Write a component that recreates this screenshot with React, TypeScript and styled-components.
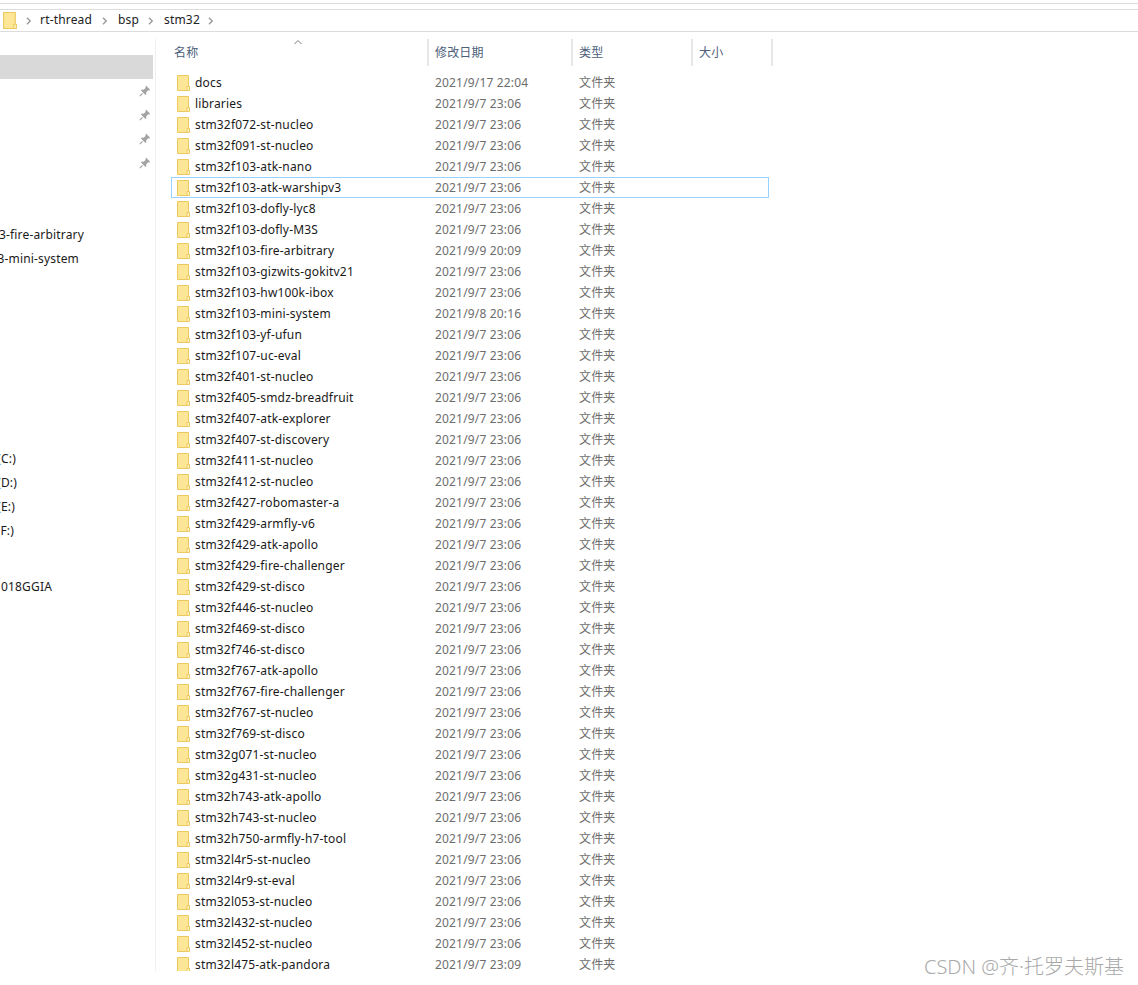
import React from 'react';
import styled, { createGlobalStyle } from 'styled-components';

const GlobalStyle = createGlobalStyle`
  html, body {
    margin: 0;
    padding: 0;
    background: #ffffff;
    overflow: hidden;
  }
`;

const FONT = `"Noto Sans", "Noto Sans CJK SC", sans-serif`;

const Page = styled.div`
  position: relative;
  width: 1138px;
  height: 985px;
  overflow: hidden;
  font-family: ${FONT};
  font-size: 12px;
  letter-spacing: 0.17px;
  padding-top: 3px;
  box-sizing: border-box;
`;

const TopLine = styled.div`
  height: 1px;
  background: #dcdcdc;
  margin-bottom: 5px;
`;

const AddressBar = styled.div`
  height: 23px;
  box-sizing: border-box;
  border-top: 1px solid #dcdcdc;
  border-bottom: 1px solid #dcdcdc;
  display: flex;
  align-items: center;
  padding-left: 3px;
  color: #222222;
`;

const Crumb = styled.span<{ $gap: number }>`
  margin-left: ${(p) => p.$gap}px;
  line-height: 20px;
  margin-bottom: 1px;
`;

const Chevron = styled.svg<{ $gap: number }>`
  flex: none;
  width: 6px;
  height: 8px;
  margin-left: ${(p) => p.$gap}px;
`;

const Body = styled.div`
  display: flex;
  height: 940px;
`;

const Sidebar = styled.div`
  width: 155px;
  flex: none;
  box-sizing: border-box;
  padding-top: 23px;
  overflow: hidden;
`;

const SideGroup = styled.div<{ $top?: number }>`
  margin-top: ${(p) => p.$top ?? 0}px;
`;

const SelectedRow = styled.div`
  width: 153px;
  height: 24px;
  background: #d9d9d9;
`;

const PinRow = styled.div`
  width: 153px;
  height: 24px;
  display: flex;
  align-items: center;
  justify-content: flex-end;
  padding-right: 2px;
  box-sizing: border-box;
`;

const SideRow = styled.div<{ $end: number }>`
  width: ${(p) => p.$end}px;
  height: 24px;
  line-height: 25px;
  display: flex;
  justify-content: flex-end;
  white-space: nowrap;
  overflow: hidden;
  color: #1a1a1a;
`;

const ListPane = styled.div`
  flex: none;
  width: 620px;
  height: 932px;
  margin-top: 7px;
  border-left: 1px solid #efefef;
  overflow: hidden;
  position: relative;
  box-sizing: border-box;
`;

const HeaderRow = styled.div`
  display: flex;
  height: 27px;
  color: #4c607a;
`;

const HeaderCell = styled.div<{ $w: number }>`
  width: ${(p) => p.$w}px;
  box-sizing: border-box;
  border-right: 2px solid #e6e6e6;
  padding-left: 6px;
  line-height: 28px;
  flex: none;
`;

const NameHeader = styled(HeaderCell)`
  padding-left: 18px;
`;

const SortCaret = styled.svg`
  position: absolute;
  left: 137px;
  top: 0;
  width: 10px;
  height: 6px;
`;

const Rows = styled.div`
  padding-top: 6px;
  margin-left: 15px;
`;

const Row = styled.div<{ $focused?: boolean }>`
  width: 598px;
  height: 21px;
  display: flex;
  align-items: center;
  box-sizing: border-box;
  border: 1px solid ${(p) => (p.$focused ? '#99d1ff' : 'transparent')};
  padding-left: 5px;
`;

const NameCell = styled.span`
  width: 240px;
  flex: none;
  margin-left: 5px;
  color: #1a1a1a;
  white-space: nowrap;
`;

const DateCell = styled.span`
  width: 144px;
  flex: none;
  color: #6d6d6d;
`;

const TypeCell = styled.span`
  color: #6d6d6d;
  margin-bottom: 1px;
`;

const Watermark = styled.div`
  position: absolute;
  right: 14px;
  top: 955px;
  font-size: 20px;
  font-weight: 300;
  letter-spacing: 0;
  line-height: 24px;
  color: #a9a9a9;
  white-space: nowrap;
`;

const FolderIcon: React.FC<{ big?: boolean }> = ({ big }) => (
  <svg width={big ? 14 : 13} height={big ? 17 : 16} viewBox="0 0 13 16" style={{ flex: 'none' }}>
    <path d="M0.5 0.5H11.5V15.5H0.5Z" fill="#fde796" stroke="#ecc95e" />
    <path d="M10 11.5H12.5V15.5H10Z" fill="#fff3c4" stroke="#ecc95e" />
  </svg>
);

const PinIcon = () => (
  <svg width="12" height="12" viewBox="0 0 12 12">
    <path d="M7.2 0.8L11.2 4.8L10.2 5.6L9.3 5.2L7.2 7.3L7.4 9.2L6.4 10L2 5.6L2.8 4.6L4.7 4.8L6.8 2.7L6.4 1.8Z" fill="#a3a3a3" />
    <path d="M3.6 8.4L0.8 11.2" stroke="#a3a3a3" strokeWidth="1.2" />
  </svg>
);

const ChevronIcon: React.FC<{ gap: number }> = ({ gap }) => (
  <Chevron $gap={gap} viewBox="0 0 6 8">
    <path d="M1 0.8L4.2 4L1 7.2" fill="none" stroke="#9a9a9a" strokeWidth="1.4" />
  </Chevron>
);

const folders: [string, string][] = [
  ['docs', '2021/9/17 22:04'],
  ['libraries', '2021/9/7 23:06'],
  ['stm32f072-st-nucleo', '2021/9/7 23:06'],
  ['stm32f091-st-nucleo', '2021/9/7 23:06'],
  ['stm32f103-atk-nano', '2021/9/7 23:06'],
  ['stm32f103-atk-warshipv3', '2021/9/7 23:06'],
  ['stm32f103-dofly-lyc8', '2021/9/7 23:06'],
  ['stm32f103-dofly-M3S', '2021/9/7 23:06'],
  ['stm32f103-fire-arbitrary', '2021/9/9 20:09'],
  ['stm32f103-gizwits-gokitv21', '2021/9/7 23:06'],
  ['stm32f103-hw100k-ibox', '2021/9/7 23:06'],
  ['stm32f103-mini-system', '2021/9/8 20:16'],
  ['stm32f103-yf-ufun', '2021/9/7 23:06'],
  ['stm32f107-uc-eval', '2021/9/7 23:06'],
  ['stm32f401-st-nucleo', '2021/9/7 23:06'],
  ['stm32f405-smdz-breadfruit', '2021/9/7 23:06'],
  ['stm32f407-atk-explorer', '2021/9/7 23:06'],
  ['stm32f407-st-discovery', '2021/9/7 23:06'],
  ['stm32f411-st-nucleo', '2021/9/7 23:06'],
  ['stm32f412-st-nucleo', '2021/9/7 23:06'],
  ['stm32f427-robomaster-a', '2021/9/7 23:06'],
  ['stm32f429-armfly-v6', '2021/9/7 23:06'],
  ['stm32f429-atk-apollo', '2021/9/7 23:06'],
  ['stm32f429-fire-challenger', '2021/9/7 23:06'],
  ['stm32f429-st-disco', '2021/9/7 23:06'],
  ['stm32f446-st-nucleo', '2021/9/7 23:06'],
  ['stm32f469-st-disco', '2021/9/7 23:06'],
  ['stm32f746-st-disco', '2021/9/7 23:06'],
  ['stm32f767-atk-apollo', '2021/9/7 23:06'],
  ['stm32f767-fire-challenger', '2021/9/7 23:06'],
  ['stm32f767-st-nucleo', '2021/9/7 23:06'],
  ['stm32f769-st-disco', '2021/9/7 23:06'],
  ['stm32g071-st-nucleo', '2021/9/7 23:06'],
  ['stm32g431-st-nucleo', '2021/9/7 23:06'],
  ['stm32h743-atk-apollo', '2021/9/7 23:06'],
  ['stm32h743-st-nucleo', '2021/9/7 23:06'],
  ['stm32h750-armfly-h7-tool', '2021/9/7 23:06'],
  ['stm32l4r5-st-nucleo', '2021/9/7 23:06'],
  ['stm32l4r9-st-eval', '2021/9/7 23:06'],
  ['stm32l053-st-nucleo', '2021/9/7 23:06'],
  ['stm32l432-st-nucleo', '2021/9/7 23:06'],
  ['stm32l452-st-nucleo', '2021/9/7 23:06'],
  ['stm32l475-atk-pandora', '2021/9/7 23:09'],
];

const App: React.FC = () => (
  <Page>
    <GlobalStyle />
    <TopLine />
    <AddressBar>
      <FolderIcon big />
      <ChevronIcon gap={9} />
      <Crumb $gap={8}>rt-thread</Crumb>
      <ChevronIcon gap={10} />
      <Crumb $gap={10}>bsp</Crumb>
      <ChevronIcon gap={9} />
      <Crumb $gap={10}>stm32</Crumb>
      <ChevronIcon gap={8} />
    </AddressBar>
    <Body>
      <Sidebar>
        <SelectedRow />
        {[0, 1, 2, 3].map((i) => (
          <PinRow key={i}>
            <PinIcon />
          </PinRow>
        ))}
        <SideGroup $top={47}>
          <SideRow $end={84}>3-fire-arbitrary</SideRow>
          <SideRow $end={79}>3-mini-system</SideRow>
        </SideGroup>
        <SideGroup $top={176}>
          <SideRow $end={16}>(C:)</SideRow>
          <SideRow $end={17}>(D:)</SideRow>
          <SideRow $end={15}>(E:)</SideRow>
          <SideRow $end={14}>(F:)</SideRow>
        </SideGroup>
        <SideGroup $top={32}>
          <SideRow $end={52}>018GGIA</SideRow>
        </SideGroup>
      </Sidebar>
      <ListPane>
        <SortCaret viewBox="0 0 10 6">
          <path d="M1.5 5L5 1.5L8.5 5" fill="none" stroke="#7a7a7a" />
        </SortCaret>
        <HeaderRow>
          <NameHeader $w={273}>名称</NameHeader>
          <HeaderCell $w={144}>修改日期</HeaderCell>
          <HeaderCell $w={120}>类型</HeaderCell>
          <HeaderCell $w={80}>大小</HeaderCell>
        </HeaderRow>
        <Rows>
          {folders.map(([name, date]) => (
            <Row key={name} $focused={name === 'stm32f103-atk-warshipv3'}>
              <FolderIcon />
              <NameCell>{name}</NameCell>
              <DateCell>{date}</DateCell>
              <TypeCell>文件夹</TypeCell>
            </Row>
          ))}
        </Rows>
      </ListPane>
    </Body>
    <Watermark>CSDN @齐·托罗夫斯基</Watermark>
  </Page>
);

export default App;
